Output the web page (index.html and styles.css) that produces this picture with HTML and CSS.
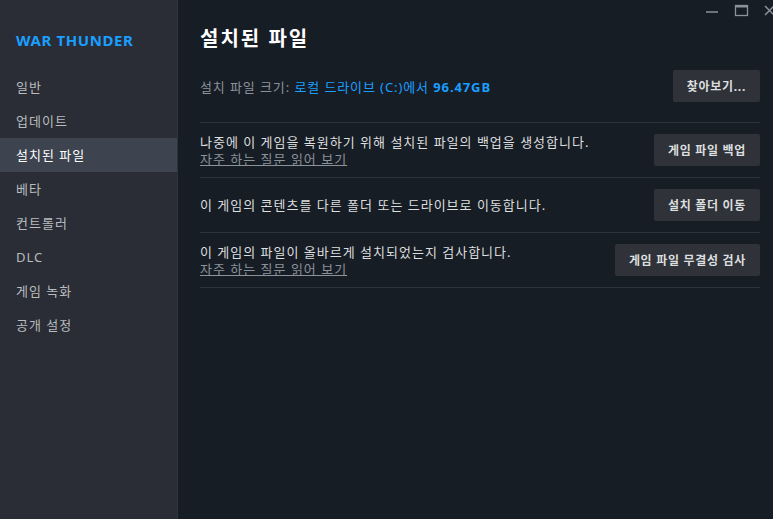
FILE: index.html
```html
<!DOCTYPE html>
<html lang="ko">
<head>
<meta charset="utf-8">
<link rel="stylesheet" href="styles.css">
</head>
<body>
<div class="app">
  <nav class="sidebar">
    <div class="game-title">WAR THUNDER</div>
    <ul class="menu">
      <li class="menu-item">일반</li>
      <li class="menu-item">업데이트</li>
      <li class="menu-item active">설치된 파일</li>
      <li class="menu-item">베타</li>
      <li class="menu-item">컨트롤러</li>
      <li class="menu-item">DLC</li>
      <li class="menu-item">게임 녹화</li>
      <li class="menu-item">공개 설정</li>
    </ul>
  </nav>
  <main class="content">
    <div class="window-controls">
      <svg class="wc" width="16" height="16" viewBox="0 0 16 16"><line x1="2" y1="10" x2="14" y2="10" stroke="#8b929a" stroke-width="1.5"/></svg>
      <svg class="wc" width="16" height="16" viewBox="0 0 16 16"><rect x="2.5" y="3.5" width="12" height="10" fill="none" stroke="#8b929a" stroke-width="1.3"/><line x1="2.5" y1="4.5" x2="14.5" y2="4.5" stroke="#8b929a" stroke-width="2"/></svg>
      <svg class="wc" width="16" height="16" viewBox="0 0 16 16"><path d="M3 4 L12 13 M12 4 L3 13" stroke="#8b929a" stroke-width="1.5"/></svg>
    </div>
    <h1 class="page-title">설치된 파일</h1>
    <div class="size-row">
      <div class="size-text">설치 파일 크기: <span class="hl">로컬 드라이브 (C:)에서 <b>96.47GB</b></span></div>
      <button class="btn">찾아보기...</button>
    </div>
    <div class="section">
      <div class="row">
        <div class="row-text">
          <div class="desc">나중에 이 게임을 복원하기 위해 설치된 파일의 백업을 생성합니다.</div>
          <a class="faq">자주 하는 질문 읽어 보기</a>
        </div>
        <button class="btn">게임 파일 백업</button>
      </div>
      <div class="row">
        <div class="row-text">
          <div class="desc">이 게임의 콘텐츠를 다른 폴더 또는 드라이브로 이동합니다.</div>
        </div>
        <button class="btn">설치 폴더 이동</button>
      </div>
      <div class="row">
        <div class="row-text">
          <div class="desc">이 게임의 파일이 올바르게 설치되었는지 검사합니다.</div>
          <a class="faq">자주 하는 질문 읽어 보기</a>
        </div>
        <button class="btn">게임 파일 무결성 검사</button>
      </div>
    </div>
  </main>
</div>
</body>
</html>
```
FILE: styles.css
```css
* { box-sizing: border-box; }
html, body { margin: 0; padding: 0; height: 100%; }
body {
  font-family: "Noto Sans", "Noto Sans CJK KR", sans-serif;
  background: #171d25;
  color: #dcdedf;
  overflow: hidden;
}
.app { display: flex; height: 519px; }
.sidebar {
  width: 178px;
  flex: none;
  background: #2a2d35;
  padding-top: 30px;
  border-right: 1px solid #30343c;
}
.game-title {
  color: #1a9fff;
  font-weight: 700;
  font-size: 15px;
  padding-left: 16px;
  height: 20px;
  line-height: 20px;
  letter-spacing: 0.6px;
}
.menu { list-style: none; margin: 20px 0 0; padding: 0; }
.menu-item {
  height: 34px;
  line-height: 34px;
  padding-left: 16px;
  font-size: 13px;
  letter-spacing: 1px;
  color: #b8bcbf;
}
.menu-item.active {
  background: #3d4450;
  color: #ffffff;
}
.content {
  flex: 1;
  position: relative;
  padding: 24px 13px 0 22px;
}
.window-controls {
  position: absolute;
  top: 2px;
  right: -5px;
  display: flex;
  gap: 13px;
}
.page-title {
  margin: 0;
  font-size: 20px;
  font-weight: 700;
  color: #ffffff;
  line-height: 30px;
  letter-spacing: 2px;
}
.size-row {
  display: flex;
  justify-content: space-between;
  align-items: center;
  margin-top: 16px;
  padding-bottom: 20px;
}
.size-text { font-size: 13px; color: #8b929a; letter-spacing: 0.9px; }
.hl { color: #1a9fff; }
.hl b { font-weight: 700; }
.btn {
  font-family: inherit;
  font-size: 12px;
  font-weight: 700;
  letter-spacing: 0.7px;
  color: #dcdedf;
  background: #2f3339;
  border: none;
  border-radius: 2px;
  height: 32px;
  padding: 0 14px;
}
.section { border-top: 1px solid #2c323a; }
.row {
  display: flex;
  justify-content: space-between;
  align-items: center;
  border-bottom: 1px solid #2c323a;
  min-height: 55px;
  padding: 9px 0;
}
.row-text { display: flex; flex-direction: column; }
.desc { font-size: 13px; color: #dcdedf; line-height: 18px; letter-spacing: 1px; }
.faq {
  font-size: 13px;
  color: #8b929a;
  text-decoration: underline;
  line-height: 17px;
  letter-spacing: 1px;
}
```
